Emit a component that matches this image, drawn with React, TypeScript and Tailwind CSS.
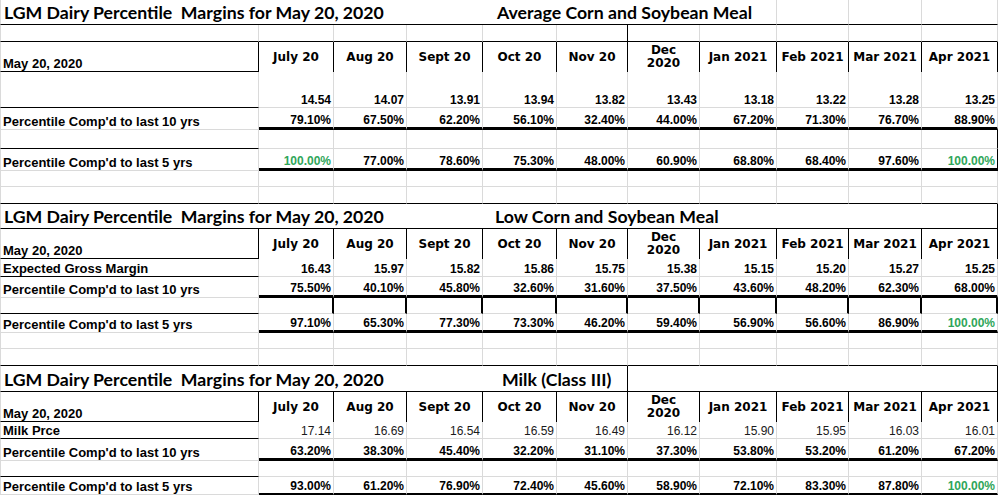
import React from "react";

const WC = [
  "w-[259px]",
  "w-[75px]",
  "w-[73px]",
  "w-[76px]",
  "w-[74px]",
  "w-[71px]",
  "w-[72px]",
  "w-[77px]",
  "w-[72px]",
  "w-[73px]",
  "w-[76px]",
];

const BB: Record<string, string> = {
  g: "border-b border-b-[#dadada]",
  k: "border-b border-b-black",
  "2": "border-b-2 border-b-black",
  "3": "border-b-[3px] border-b-black",
  n: "border-b-0",
};
const BR: Record<string, string> = {
  g: "border-r border-r-[#dadada]",
  k: "border-r border-r-black",
  "2": "border-r-2 border-r-black",
  n: "border-r-0",
};

type Kind = "title" | "head" | "val" | "thin" | "blank";

type RowSpec = {
  h: string;
  kind: Kind;
  b: string;
  r: string;
  label?: string;
  vals?: string[];
  title2?: string;
  t2pad?: string;
};

const MONTHS = [
  "July 20",
  "Aug 20",
  "Sept 20",
  "Oct 20",
  "Nov 20",
  "Dec\n2020",
  "Jan 2021",
  "Feb 2021",
  "Mar 2021",
  "Apr 2021",
];

const TITLE = "LGM Dairy Percentile  Margins for May 20, 2020";

const ROWS: RowSpec[] = [
  // Section 1
  { h: "h-[25px]", kind: "title", b: "kkkkkkkkkkk", r: "nnnnnnngggg", title2: "Average Corn and Soybean Meal", t2pad: "pl-[14px]" },
  { h: "h-[17px]", kind: "blank", b: "kkkkkkkkkkk", r: "gggggkggggg" },
  { h: "h-[30px]", kind: "head", b: "knnnnnnnnnn", r: "kkkkkkkkkkk", label: "May 20, 2020" },
  { h: "h-[36px]", kind: "val", b: "kgggggggggg", r: "ggggggggggg", label: "", vals: ["14.54", "14.07", "13.91", "13.94", "13.82", "13.43", "13.18", "13.22", "13.28", "13.25"] },
  { h: "h-[22px]", kind: "val", b: "g3333333333", r: "ggggggggggg", label: "Percentile Comp'd to last 10 yrs", vals: ["79.10%", "67.50%", "62.20%", "56.10%", "32.40%", "44.00%", "67.20%", "71.30%", "76.70%", "88.90%"] },
  { h: "h-[19px]", kind: "blank", b: "kgggggggggg", r: "ggggggggggk" },
  { h: "h-[22px]", kind: "val", b: "g3333333333", r: "ggggggggggk", label: "Percentile Comp'd to last 5 yrs", vals: ["*100.00%", "77.00%", "78.60%", "75.30%", "48.00%", "60.90%", "68.80%", "68.40%", "97.60%", "*100.00%"] },
  { h: "h-[16px]", kind: "blank", b: "ggggggggggg", r: "ggggggggggg" },
  { h: "h-[17px]", kind: "blank", b: "kkkkkkkkkkk", r: "ggggggggggg" },
  // Section 2
  { h: "h-[25px]", kind: "title", b: "kkkkkkkkkkk", r: "nnnnnnnnnnk", title2: "Low Corn and Soybean Meal", t2pad: "pl-[12px]" },
  { h: "h-[30px]", kind: "head", b: "knnnnnnnnnn", r: "kkkkkkkkkkk", label: "May 20, 2020" },
  { h: "h-[18px]", kind: "val", b: "kgggggggggg", r: "ggggggggggg", label: "Expected Gross Margin", vals: ["16.43", "15.97", "15.82", "15.86", "15.75", "15.38", "15.15", "15.20", "15.27", "15.25"] },
  { h: "h-[21px]", kind: "val", b: "g3333333333", r: "ggggggggggg", label: "Percentile Comp'd to last 10 yrs", vals: ["75.50%", "40.10%", "45.80%", "32.60%", "31.60%", "37.50%", "43.60%", "48.20%", "62.30%", "68.00%"] },
  { h: "h-[16px]", kind: "blank", b: "kgggggggggg", r: "g2222222222" },
  { h: "h-[19px]", kind: "val", b: "g3333333333", r: "ggggggggggg", label: "Percentile Comp'd to last 5 yrs", vals: ["97.10%", "65.30%", "77.30%", "73.30%", "46.20%", "59.40%", "56.90%", "56.60%", "86.90%", "*100.00%"] },
  { h: "h-[16px]", kind: "blank", b: "ggggggggggg", r: "ggggggggggg" },
  { h: "h-[17px]", kind: "blank", b: "kkkkkkkkkkk", r: "ggggggggggg" },
  // Section 3
  { h: "h-[26px]", kind: "title", b: "kkkkkkkkkkk", r: "nnnnnknnnnk", title2: "Milk (Class III)", t2pad: "pl-[19px]" },
  { h: "h-[30px]", kind: "head", b: "knnnnnnnnnn", r: "kkkkkkkkkkk", label: "May 20, 2020" },
  { h: "h-[17px]", kind: "thin", b: "kgggggggggg", r: "ggggggggggg", label: "Milk Prce", vals: ["17.14", "16.69", "16.54", "16.59", "16.49", "16.12", "15.90", "15.95", "16.03", "16.01"] },
  { h: "h-[22px]", kind: "val", b: "g3333333333", r: "ggggggggggg", label: "Percentile Comp'd to last 10 yrs", vals: ["63.20%", "38.30%", "45.40%", "32.20%", "31.10%", "37.30%", "53.80%", "53.20%", "61.20%", "67.20%"] },
  { h: "h-[16px]", kind: "blank", b: "kgggggggggg", r: "ggggggggggg" },
  { h: "h-[18px]", kind: "val", b: "g2222222222", r: "ggggggggggg", label: "Percentile Comp'd to last 5 yrs", vals: ["93.00%", "61.20%", "76.90%", "72.40%", "45.60%", "58.90%", "72.10%", "83.30%", "87.80%", "*100.00%"] },
];

const LABEL = "font-['Liberation_Sans',Arial,sans-serif] font-bold text-[13px] leading-[15px] text-black pl-[2px] whitespace-nowrap";
const NUM = "font-['Liberation_Sans',Arial,sans-serif] text-[12px] leading-[14px] pr-[2px] whitespace-nowrap";
const HEAD = "font-['DejaVu_Sans',Verdana,sans-serif] font-bold text-[12px] leading-[13px] text-black text-center whitespace-pre";
const TITLEC = "font-['Lato','Open_Sans',sans-serif] font-bold text-[17.7px] leading-[22px] text-black whitespace-pre";

function Row({ spec }: { spec: RowSpec }) {
  const cells = [];
  for (let i = 0; i < 11; i++) {
    const base = `${WC[i]} shrink-0 h-full box-border ${BB[spec.b[i]]} ${BR[spec.r[i]]} ${i === 0 ? "border-l border-l-[#dadada]" : ""}`;
    let content: React.ReactNode = null;
    let layout = "flex";
    if (spec.kind === "title") {
      layout = "flex items-end overflow-visible relative";
      if (i === 0) content = <span className={`${TITLEC} pl-[3px]`}>{TITLE}</span>;
      if (i === 4 && spec.title2) content = <span className={`${TITLEC} ${spec.t2pad}`}>{spec.title2}</span>;
    } else if (spec.kind === "head") {
      if (i === 0) {
        layout = "flex items-end";
        content = <span className={LABEL}>{spec.label}</span>;
      } else {
        layout = "flex items-center justify-center";
        content = <span className={HEAD}>{MONTHS[i - 1]}</span>;
      }
    } else if (spec.kind === "val" || spec.kind === "thin") {
      if (i === 0) {
        layout = "flex items-end";
        content = <span className={LABEL}>{spec.label}</span>;
      } else {
        layout = "flex items-end justify-end";
        const v = spec.vals ? spec.vals[i - 1] : "";
        const green = v.startsWith("*");
        const txt = green ? v.slice(1) : v;
        const weight = spec.kind === "thin" ? "font-normal text-[#1a1a1a]" : "font-bold";
        content = (
          <span className={`${NUM} ${weight} ${green ? "text-[#2fa65a]" : spec.kind === "thin" ? "" : "text-black"}`}>{txt}</span>
        );
      }
    }
    cells.push(
      <div key={i} className={`${base} ${layout}`}>
        {content}
      </div>
    );
  }
  return <div className={`flex ${spec.h}`}>{cells}</div>;
}

export default function App() {
  return (
    <div className="w-[999px] h-[496px] bg-white overflow-hidden">
      {ROWS.map((r, i) => (
        <Row key={i} spec={r} />
      ))}
    </div>
  );
}
